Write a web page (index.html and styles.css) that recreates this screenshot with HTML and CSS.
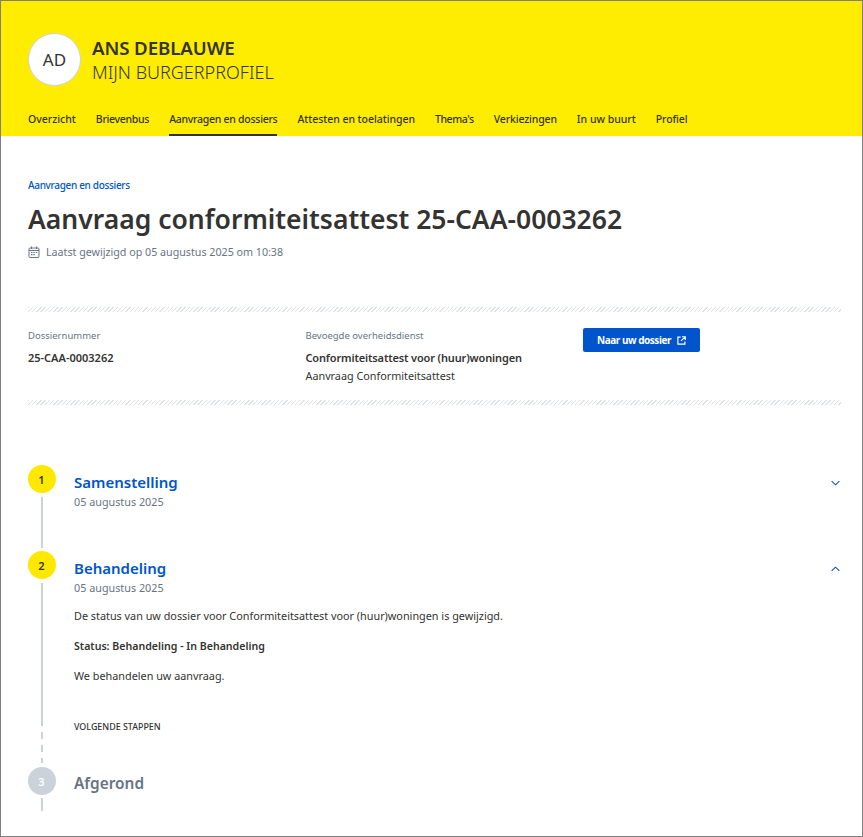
FILE: index.html
```html
<!DOCTYPE html>
<html lang="nl">
<head>
<meta charset="utf-8">
<title>Aanvraag conformiteitsattest</title>
<link rel="stylesheet" href="styles.css">
</head>
<body>
<div class="frame">
  <header class="hero">
    <div class="identity">
      <div class="avatar">AD</div>
      <div class="who">
        <div class="name">ANS DEBLAUWE</div>
        <div class="profile">MIJN BURGERPROFIEL</div>
      </div>
    </div>
    <nav class="nav">
      <a class="nav-item">Overzicht</a>
      <a class="nav-item">Brievenbus</a>
      <a class="nav-item active">Aanvragen en dossiers</a>
      <a class="nav-item">Attesten en toelatingen</a>
      <a class="nav-item">Thema's</a>
      <a class="nav-item">Verkiezingen</a>
      <a class="nav-item">In uw buurt</a>
      <a class="nav-item">Profiel</a>
    </nav>
  </header>
  <main class="main">
    <a class="crumb">Aanvragen en dossiers</a>
    <h1 class="title">Aanvraag conformiteitsattest 25-CAA-0003262</h1>
    <div class="modified">
      <svg class="cal" viewBox="0 0 12 12" width="12" height="12" fill="none" stroke="#687483" stroke-width="1">
        <rect x="1" y="2" width="10" height="9.500" rx="1"/>
        <path d="M1 4.500h10M3.500 .5v2.500M8.500 .5v2.500"/>
        <path d="M3 6.500h1.500M5.300 6.500h1.500M7.700 6.500h1.500M3 8.700h1.500M5.300 8.700h1.500" stroke-width="1.200"/>
      </svg>
      <span>Laatst gewijzigd op 05 augustus 2025 om 10:38</span>
    </div>
    <section class="facts">
      <div class="fact">
        <div class="label">Dossiernummer</div>
        <div class="strong number">25-CAA-0003262</div>
      </div>
      <div class="fact">
        <div class="label">Bevoegde overheidsdienst</div>
        <div class="strong">Conformiteitsattest voor (huur)woningen</div>
        <div class="plain">Aanvraag Conformiteitsattest</div>
      </div>
      <div class="fact">
        <a class="button">Naar uw dossier
          <svg viewBox="0 0 10 10" width="9" height="9" fill="none" stroke="#fff" stroke-width="1.300">
            <path d="M4 1.200H1v7.800h7.800V6M5.500 .8h3.700v3.700M9 1 4.500 5.500"/>
          </svg>
        </a>
      </div>
    </section>
    <section class="steps">
      <article class="step step-one">
        <div class="rail">
          <div class="dot">1</div>
          <div class="line"></div>
        </div>
        <div class="body">
          <div class="step-head">
            <h2 class="step-title">Samenstelling</h2>
            <svg class="chev" viewBox="0 0 10 6" width="9" height="6" fill="none" stroke="#0055cc" stroke-width="1.200"><path d="M.7 .8 5 5 9.300 .8"/></svg>
          </div>
          <div class="date">05 augustus 2025</div>
        </div>
      </article>
      <article class="step step-two">
        <div class="rail">
          <div class="dot">2</div>
          <div class="line"></div>
          <div class="dash"></div>
        </div>
        <div class="body">
          <div class="step-head">
            <h2 class="step-title">Behandeling</h2>
            <svg class="chev" viewBox="0 0 10 6" width="9" height="6" fill="none" stroke="#0055cc" stroke-width="1.200"><path d="M.7 5.200 5 1 9.300 5.200"/></svg>
          </div>
          <div class="date">05 augustus 2025</div>
          <p class="text first">De status van uw dossier voor Conformiteitsattest voor (huur)woningen is gewijzigd.</p>
          <p class="text bold">Status: Behandeling - In Behandeling</p>
          <p class="text">We behandelen uw aanvraag.</p>
          <div class="next">VOLGENDE STAPPEN</div>
        </div>
      </article>
      <article class="step step-three">
        <div class="rail">
          <div class="dot muted">3</div>
          <div class="line short"></div>
        </div>
        <div class="body">
          <h2 class="step-title grey">Afgerond</h2>
        </div>
      </article>
    </section>
  </main>
</div>
</body>
</html>
```
FILE: styles.css
```css
* { box-sizing: border-box; }
html, body { margin: 0; padding: 0; background: #fff; }
body { font-family: "Noto Sans", "Open Sans", sans-serif; color: #333332; }
.frame { width: 863px; height: 837px; border: 1px solid #808080; overflow: hidden; }
.hero { background: #ffed00; height: 135px; padding: 32px 27px 0; display: flex; flex-direction: column; }
.identity { display: flex; align-items: center; gap: 11px; height: 53px; }
.avatar { width: 53px; height: 53px; border-radius: 50%; background: #fff; border: 1px solid #cbd2da; display: flex; align-items: center; justify-content: center; font-size: 17px; color: #333332; }
.who { display: flex; flex-direction: column; }
.name { font-size: 18.700px; font-weight: 600; line-height: 24px; letter-spacing: -.1px; margin-top: 1px; }
.profile { font-size: 18px; font-weight: 300; line-height: 24px; }
.nav { display: flex; gap: 20px; margin-top: 18px; height: 32px; }
.nav-item { font-size: 10.500px; font-weight: 500; line-height: 30px; height: 32px; white-space: nowrap; }
.nav-item:nth-child(2) { letter-spacing: -.3px; }
.nav-item:nth-child(3) { letter-spacing: -.27px; }
.nav-item:nth-child(4) { letter-spacing: -.05px; }
.nav-item:nth-child(5) { letter-spacing: -.4px; }
.nav-item:nth-child(6) { letter-spacing: -.15px; }
.nav-item:nth-child(8) { letter-spacing: -.14px; }
.nav-item.active { border-bottom: 2px solid #333332; }
.main { padding: 0 21px 0 27px; }
.crumb { display: block; margin-top: 42px; font-size: 10px; line-height: 14px; color: #0055cc; font-weight: 500; letter-spacing: -.32px; }
.title { margin: 9px 0 0; font-size: 26.500px; line-height: 36px; font-weight: 600; }
.modified { display: flex; align-items: center; gap: 6px; margin-top: 7px; font-size: 10.700px; line-height: 16px; color: #687483; }
.facts { display: grid; grid-template-columns: 277.500px 277.500px 1fr; margin-top: 47px; height: 98px; padding-top: 21px; background-image: repeating-linear-gradient(135deg, #dfe3e8 0 1px, transparent 1px 3px), repeating-linear-gradient(135deg, #dfe3e8 0 1px, transparent 1px 3px); background-size: 100% 5px, 100% 5px; background-position: 0 0, 0 100%; background-repeat: no-repeat; }
.label { font-size: 9.500px; line-height: 16px; color: #687483; }
.strong { margin-top: 6px; font-size: 11px; line-height: 16px; font-weight: 600; letter-spacing: -.15px; }
.strong.number { letter-spacing: 0; }
.plain { margin-top: 2px; font-size: 10.800px; line-height: 16px; }
.button { display: flex; width: fit-content; align-items: center; gap: 6px; height: 24px; padding: 0 14px; background: #0055cc; color: #fff; border-radius: 2px; font-size: 10px; font-weight: 700; letter-spacing: -.46px; }
.steps { margin-top: 60px; display: flex; flex-direction: column; }
.step { display: flex; gap: 18px; }
.step-one { height: 86px; }
.step-two { height: 216px; }
.rail { width: 28px; flex: none; display: flex; flex-direction: column; align-items: center; }
.dot { width: 28px; height: 28px; flex: none; margin-right: 1px; border-radius: 50%; background: #ffe800; display: flex; align-items: center; justify-content: center; font-size: 11px; font-weight: 600; }
.dot.muted { background: #cbd2da; color: #fff; }
.line { width: 2px; flex: 1; margin-top: 4px; margin-bottom: 3px; background: #cbd2da; }
.line.short { flex: none; height: 13px; margin: 3px 0 0; }
.step-two .line { flex: none; height: 143px; margin-bottom: 0; }
.dash { width: 2px; height: 37px; background: repeating-linear-gradient(180deg, transparent 0 6px, #cbd2da 6px 13px); }
.body { flex: 1; min-width: 0; }
.step-head { display: flex; justify-content: space-between; align-items: center; padding-top: 4px; height: 29px; }
.step-title { margin: 0; font-size: 15px; line-height: 22px; font-weight: 600; color: #0055cc; }
.step-title.grey { color: #687483; margin-top: 6px; font-size: 15.400px; }
.chev { margin-right: 1px; margin-top: 2px; }
.date { font-size: 10.800px; line-height: 16px; color: #687483; }
.text { margin: 14px 0 0; font-size: 10.830px; line-height: 16px; }
.text.first { margin-top: 12px; }
.bold { font-weight: 600; font-size: 10.600px; }
.next { margin-top: 36px; font-size: 8.900px; line-height: 14px; font-weight: 500; }
```
